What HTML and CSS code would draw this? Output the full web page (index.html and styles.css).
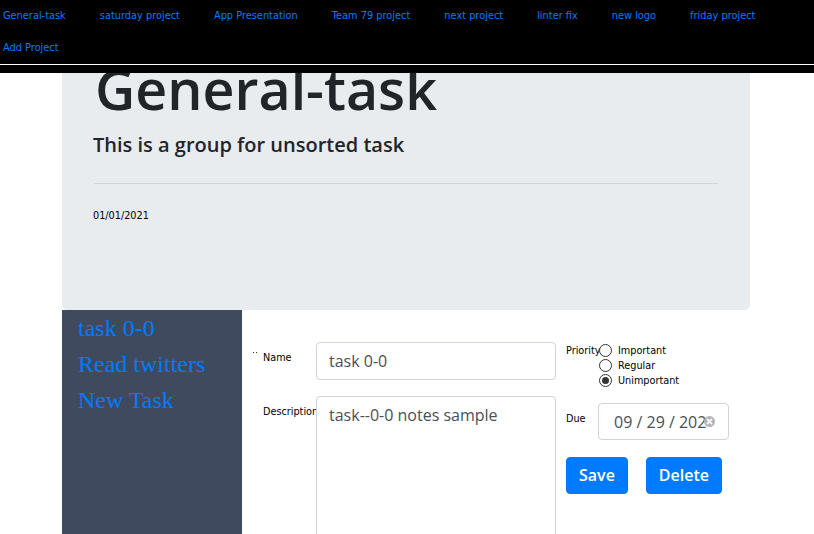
FILE: index.html
```html
<!DOCTYPE html>
<html lang="en">
<head>
<meta charset="utf-8">
<title>General-task</title>
<link rel="stylesheet" href="styles.css">
</head>
<body>
<nav class="topnav">
  <div class="nav-links">
    <a href="#">General-task</a>
    <a href="#">saturday project</a>
    <a href="#">App Presentation</a>
    <a href="#">Team 79 project</a>
    <a href="#">next project</a>
    <a href="#">linter fix</a>
    <a href="#">new logo</a>
    <a href="#">friday project</a>
    <a href="#">Add Project</a>
  </div>
  <div class="nav-strip"></div>
</nav>

<main class="page">
  <section class="jumbotron">
    <h1 class="display">General-task</h1>
    <p class="lead">This is a group for unsorted task</p>
    <hr class="divider">
    <p class="date">01/01/2021</p>
  </section>

  <section class="board">
    <aside class="sidebar">
      <a href="#">task 0-0</a>
      <a href="#">Read twitters</a>
      <a href="#">New Task</a>
    </aside>

    <form class="task-form">
      <div class="fields">
        <span class="marker"><i></i><i></i></span>
        <label class="field-label">Name</label>
        <input class="control" type="text" value="task 0-0">
        <span></span>
        <label class="field-label">Description</label>
        <textarea class="control area">task--0-0 notes sample</textarea>
      </div>

      <div class="side">
        <div class="priority">
          <span class="side-label">Priority</span>
          <div class="options">
            <label class="option"><input type="radio" name="p"><span>Important</span></label>
            <label class="option"><input type="radio" name="p"><span>Regular</span></label>
            <label class="option"><input type="radio" name="p" checked><span>Unimportant</span></label>
          </div>
        </div>
        <div class="due">
          <span class="side-label due-label">Due</span>
          <div class="date-field">
            <span class="date-text">09 / 29 / 202</span>
            <svg class="clear" width="11" height="11" viewBox="0 0 11 11"><circle cx="5.5" cy="5.5" r="5.5" fill="#b5b5b5"/><path d="M3.4 3.4 L7.6 7.6 M7.6 3.4 L3.4 7.6" stroke="#fff" stroke-width="1.6" stroke-linecap="round"/></svg>
          </div>
        </div>
        <div class="actions">
          <button type="button" class="btn">Save</button>
          <button type="button" class="btn">Delete</button>
        </div>
      </div>
    </form>
  </section>
</main>
</body>
</html>
```

FILE: styles.css
```css
html, body {
  margin: 0;
  padding: 0;
  overflow: hidden;
  height: 100%;
}
body {
  font-family: "Open Sans", "Liberation Sans", sans-serif;
  color: #212529;
  background: #fff;
}

.topnav {
  position: fixed;
  top: 0;
  left: 0;
  right: 0;
  z-index: 10;
  background: #000;
}
.nav-links {
  height: 64px;
  padding-left: 3px;
  display: flex;
  flex-wrap: wrap;
  align-content: flex-start;
  border-bottom: 1px solid #fff;
  overflow: hidden;
}
.nav-links a {
  font-family: "DejaVu Sans", sans-serif;
  font-size: 9.8px;
  line-height: 32px;
  color: #007bff;
  text-decoration: none;
  margin-right: 34px;
  white-space: nowrap;
}
.nav-strip {
  height: 8px;
  background: #000;
}

.page {
  width: 688px;
  margin-left: 62px;
}

.jumbotron {
  box-sizing: border-box;
  height: 310px;
  padding: 55px 32px 0 31px;
  background: #e9ecef;
  border-radius: 0 0 5px 5px;
}
.display {
  margin: 0 0 8px 2px;
  font-size: 55.5px;
  font-weight: 600;
  line-height: 67px;
}
.lead {
  margin: 0;
  font-size: 20px;
  font-weight: 600;
  line-height: 30px;
}
.divider {
  margin: 23px 0 24px 1px;
  border: 0;
  border-top: 1px solid rgba(0, 0, 0, 0.1);
}
.date {
  margin: 0;
  font-family: "DejaVu Sans", sans-serif;
  font-size: 9.7px;
  line-height: 15px;
  color: #000;
}

.board {
  display: flex;
  min-height: 224px;
}
.sidebar {
  width: 180px;
  flex: none;
  background: #404a5f;
  padding-left: 16px;
  box-sizing: border-box;
  display: flex;
  flex-direction: column;
  align-items: flex-start;
}
.sidebar a {
  font-family: "Liberation Serif", serif;
  font-size: 24px;
  line-height: 36px;
  color: #007bff;
  text-decoration: none;
}

.task-form {
  display: flex;
  gap: 10px;
  padding: 32px 0 0 11px;
}
.fields {
  display: grid;
  grid-template-columns: 10px 53px 240px;
  grid-template-rows: 38px 200px;
  row-gap: 16px;
  align-items: start;
}
.marker {
  display: flex;
  gap: 2px;
  padding-top: 10px;
}
.marker i {
  width: 1px;
  height: 1px;
  background: #333;
}
.field-label,
.side-label {
  font-family: "DejaVu Sans", sans-serif;
  font-size: 9.7px;
  line-height: 15px;
  color: #000;
  white-space: nowrap;
}
.field-label {
  padding-top: 8px;
}
.control {
  box-sizing: border-box;
  width: 240px;
  height: 38px;
  margin: 0;
  padding: 6px 12px;
  font-family: "Open Sans", sans-serif;
  font-size: 16px;
  line-height: 24px;
  color: #495057;
  background: #fff;
  border: 1px solid #ced4da;
  border-radius: 4px;
  z-index: 1;
}
.area {
  height: 200px;
  resize: none;
}

.side {
  padding-top: 1px;
  display: flex;
  flex-direction: column;
}
.priority {
  display: flex;
}
.priority .side-label {
  width: 33px;
}
.options {
  display: flex;
  flex-direction: column;
}
.option {
  display: flex;
  align-items: center;
  gap: 6px;
  font-family: "DejaVu Sans", sans-serif;
  font-size: 9.7px;
  line-height: 15px;
  color: #000;
}
.option input {
  appearance: none;
  -webkit-appearance: none;
  box-sizing: border-box;
  width: 13px;
  height: 13px;
  margin: 0;
  border: 1px solid #333;
  border-radius: 50%;
  background: #fff;
  display: grid;
  place-items: center;
}
.option input:checked::after {
  content: "";
  width: 7px;
  height: 7px;
  border-radius: 50%;
  background: #333;
}

.due {
  display: flex;
  margin-top: 15px;
}
.due-label {
  width: 32px;
  padding-top: 8px;
}
.date-field {
  box-sizing: border-box;
  width: 131px;
  height: 37px;
  border: 1px solid #ced4da;
  border-radius: 4px;
  display: flex;
  align-items: center;
  padding-left: 15px;
  overflow: hidden;
}
.date-text {
  font-size: 16px;
  color: #495057;
  white-space: nowrap;
}
.clear {
  flex: none;
  margin-left: -2px;
}

.actions {
  display: flex;
  gap: 18px;
  margin-top: 17px;
}
.btn {
  font-family: "Open Sans", sans-serif;
  font-size: 16px;
  font-weight: 600;
  line-height: 23px;
  padding: 6px 12px;
  color: #fff;
  background: #007bff;
  border: 1px solid #007bff;
  border-radius: 4px;
}
```
